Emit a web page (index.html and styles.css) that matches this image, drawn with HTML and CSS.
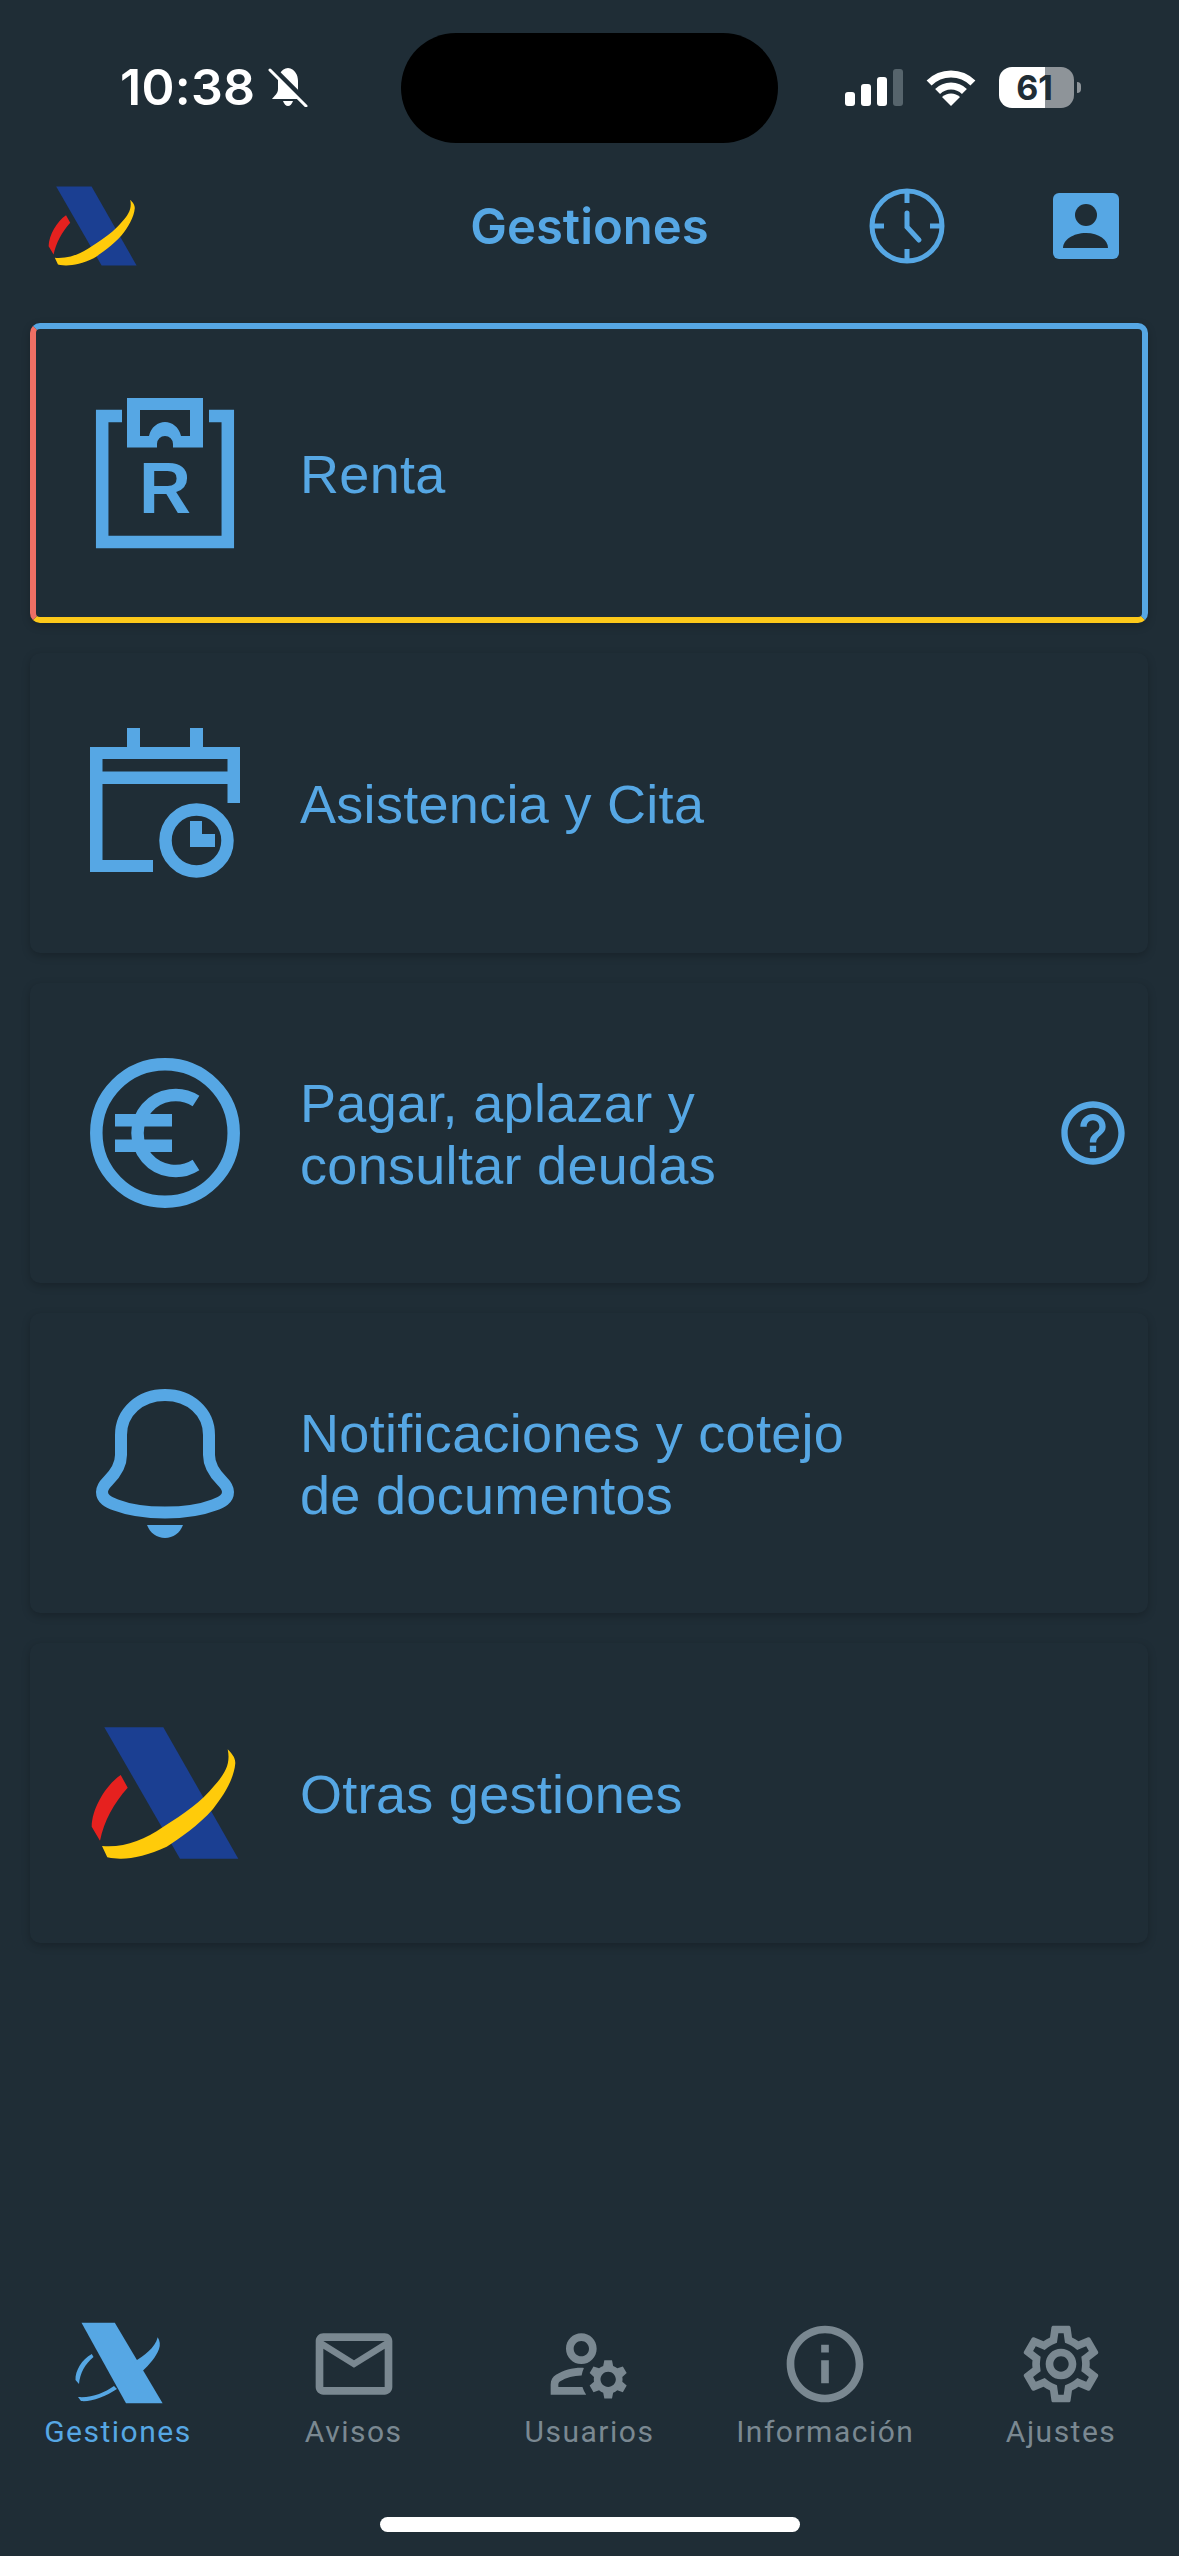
FILE: index.html
```html
<!DOCTYPE html>
<html lang="es">
<head>
    <meta charset="UTF-8">
    <meta name="viewport" content="width=device-width, initial-scale=1.0">
    <title>Gestiones</title>
    <link rel="stylesheet" href="styles.css">
</head>
<body>
    <svg class="defs" width="0" height="0">
        <symbol id="logo" viewBox="0 0 160 160">
            <path fill="#1b3f92" d="M20.3 14.3H79.3L154.3 145.7H96Z"/>
            <path fill="#e6211f" d="M36.7 62L43.7 74.7C30 90 20 108 16 127.7L7.7 113.7C8 95 22 72 36.7 62Z"/>
            <path fill="#ffcb0a" d="M143.7 36.3C147 40 151.5 44 151.3 50.3C150 66 140 82 129 96C115 112 95 126 82.7 133.7C65 142 48 146 36 145.7L27 145L23.3 144.3L18 133C40 135 60 127 79 114C100 101 118 88 130 73C140 62 147 52 143.7 36.3Z"/>
        </symbol>
    </svg>

    <div class="app">
        <div class="island"></div>

        <div class="status">
            <div class="status-left">
                <span class="time">10:38</span>
                <svg class="silent" width="40" height="40" viewBox="0 0 40 40">
                    <path fill="#fff" d="M20 1C13 2 10 8 10 14V22C10 27 6 29 4 32H36C34 29 30 27 30 22V14C30 8 27 2 20 1Z"/>
                    <path fill="#fff" d="M15 34H25C24 37 22 39 20 39C18 39 16 37 15 34Z"/>
                    <path stroke="#1f2d36" stroke-width="6" d="M4 1L39 36"/>
                    <path stroke="#fff" stroke-width="3" stroke-linecap="round" d="M2 3L38 39"/>
                </svg>
            </div>
            <div class="status-right">
                <svg width="58" height="37" viewBox="0 0 58 37">
                    <rect fill="#fff" x="0" y="23" width="10" height="14" rx="3"/>
                    <rect fill="#fff" x="16" y="15" width="10" height="22" rx="3"/>
                    <rect fill="#fff" x="32" y="8" width="10" height="29" rx="3"/>
                    <rect fill="#56646c" x="48" y="0" width="10" height="37" rx="3"/>
                </svg>
                <svg width="50" height="37" viewBox="0 0 50 37">
                    <path fill="none" stroke="#fff" stroke-width="7" d="M3.1 14.1A31 31 0 0 1 46.9 14.1"/>
                    <path fill="none" stroke="#fff" stroke-width="7" d="M11.6 22.6A19 19 0 0 1 38.4 22.6"/>
                    <path fill="#fff" d="M25 37L16 28A13 13 0 0 1 34 28Z"/>
                </svg>
                <div class="battery">
                    <div class="battery-body"><span>61</span></div>
                    <div class="battery-nub"></div>
                </div>
            </div>
        </div>

        <header class="topbar">
            <svg class="top-icon" width="96" height="96"><use href="#logo"/></svg>
            <h1 class="title">Gestiones</h1>
            <div class="top-actions">
                <svg class="top-icon blue-line" width="76" height="76" viewBox="0 0 76 76">
                    <circle cx="38" cy="38" r="35"/>
                    <path d="M38 3V15M38 61V73M3 38H15M61 38H73"/>
                    <path stroke-linecap="round" d="M38 25V39L50 52"/>
                </svg>
                <svg class="top-icon" width="66" height="66" viewBox="0 0 66 66">
                    <rect fill="#56a7e4" width="66" height="66" rx="6"/>
                    <circle fill="#1f2d36" cx="33" cy="22" r="11"/>
                    <path fill="#1f2d36" d="M10 55C10 47 20 40 33 40C46 40 55 47 55 55Z"/>
                </svg>
            </div>
        </header>

        <main class="list">
            <a class="card card-active">
                <svg class="card-icon" width="160" height="160" viewBox="0 0 160 160">
                    <path fill="none" stroke="#56a7e4" stroke-width="12.5" d="M38 23H18.2V149H143.8V23H125"/>
                    <path fill="#56a7e4" fill-rule="evenodd" d="M43 5H119V54.5H89V51A8 8 0 0 0 73 51V54.5H43ZM56 17V43H65C67 34 74 29 81 29C88 29 95 34 97 43H106V17Z"/>
                    <text class="icon-letter" x="81" y="120" text-anchor="middle">R</text>
                </svg>
                <span class="card-label">Renta</span>
            </a>
            <a class="card">
                <svg class="card-icon" width="160" height="160" viewBox="0 0 160 160">
                    <path fill="#56a7e4" fill-rule="evenodd" d="M43 5H56V24H106V5H119V24H156V80H143.5V61H18.5V137H69V149H6V24H43ZM18.5 36V48.600H143.5V36Z"/>
                    <circle fill="none" stroke="#56a7e4" stroke-width="12.5" cx="112.5" cy="117.5" r="31"/>
                    <path fill="#56a7e4" d="M106 98H118V111H131V124H106Z"/>
                </svg>
                <span class="card-label">Asistencia y Cita</span>
            </a>
            <a class="card">
                <svg class="card-icon" width="160" height="160" viewBox="0 0 160 160">
                    <circle fill="none" stroke="#56a7e4" stroke-width="12.5" cx="81" cy="80" r="68.7"/>
                    <path fill="none" stroke="#56a7e4" stroke-width="12.5" d="M112 48A38 38 0 1 0 112 112"/>
                    <path fill="#56a7e4" d="M31 61H88V73.5H31ZM31 86.5H88V99H31Z"/>
                </svg>
                <span class="card-label">Pagar, aplazar y<br>consultar deudas</span>
                <svg class="help" width="76" height="76" viewBox="0 0 24 24">
                    <path fill="#56a7e4" d="M11 18h2v-2h-2v2zm1-16C6.48 2 2 6.48 2 12s4.48 10 10 10 10-4.48 10-10S17.52 2 12 2zm0 18c-4.41 0-8-3.59-8-8s3.59-8 8-8 8 3.59 8 8-3.59 8-8 8zm0-14c-2.21 0-4 1.79-4 4h2c0-1.1.9-2 2-2s2 .9 2 2c0 2-3 1.75-3 5h2c0-2.25 3-2.5 3-5 0-2.21-1.79-4-4-4z"/>
                </svg>
            </a>
            <a class="card">
                <svg class="card-icon" width="160" height="160" viewBox="0 0 160 160">
                    <path fill="none" stroke="#56a7e4" stroke-width="12" d="M81 12C56 12 37 29 37 52V72C37 84 30 92 24 98C20 102 18 105 18 109C18 116 24 119 32 122C45 127 62 129.5 81 129.5C100 129.5 117 127 130 122C138 119 144 116 144 109C144 105 142 102 138 98C132 92 125 84 125 72V52C125 29 106 12 81 12Z"/>
                    <path fill="#56a7e4" d="M63 142H99C96 150 89 155 81 155C73 155 66 150 63 142Z"/>
                </svg>
                <span class="card-label">Notificaciones y cotejo<br>de documentos</span>
            </a>
            <a class="card">
                <svg class="card-icon" width="160" height="160"><use href="#logo"/></svg>
                <span class="card-label">Otras gestiones</span>
            </a>
        </main>

        <nav class="tabs">
            <div class="tab tab-on">
                <svg class="tab-icon" width="92" height="92" viewBox="0 0 92 92">
                    <path d="M9.5 4.7H42.8L90.6 85.3H54Z"/>
                    <path d="M85.700 19.3C88 23 88.5 27 87 31C84 39 78 46 69.6 54L62 44C72 38 83 30 85.7 19.3ZM45 71C33 79 19 84 9 83L6 79C20 80 32 75 42 68Z"/>
                    <path d="M19.8 36L21.5 39C13 46 8 55 7 66L3.5 62C3 53 10 41 19.8 36Z"/>
                </svg>
                <span class="tab-label">Gestiones</span>
            </div>
            <div class="tab">
                <svg class="tab-icon" width="92" height="92" viewBox="0 0 24 24">
                    <path d="M20 4H4c-1.1 0-1.99.9-1.99 2L2 18c0 1.1.9 2 2 2h16c1.1 0 2-.9 2-2V6c0-1.1-.9-2-2-2zm0 14H4V8l8 5 8-5v10zm-8-7L4 6h16l-8 5z"/>
                </svg>
                <span class="tab-label">Avisos</span>
            </div>
            <div class="tab">
                <svg class="tab-icon" width="92" height="92" viewBox="0 0 24 24">
                    <path d="M4 18v-.65c0-.34.16-.66.41-.81C6.1 15.53 8.03 15 10 15c.03 0 .05 0 .08.01.1-.7.3-1.37.59-1.98-.22-.02-.44-.03-.67-.03-2.42 0-4.68.67-6.61 1.82-.88.52-1.39 1.5-1.39 2.53V20h9.26c-.42-.6-.75-1.28-.97-2H4zM10 12c2.21 0 4-1.79 4-4s-1.79-4-4-4-4 1.79-4 4 1.79 4 4 4zm0-6c1.1 0 2 .9 2 2s-.9 2-2 2-2-.9-2-2 .9-2 2-2zM20.75 16c0-.22-.03-.42-.06-.63l1.14-1.01-1-1.73-1.45.49c-.32-.27-.68-.48-1.08-.63L18 11h-2l-.3 1.49c-.4.15-.76.36-1.08.63l-1.45-.49-1 1.73 1.14 1.01c-.03.21-.06.41-.06.63s.03.42.06.63l-1.14 1.01 1 1.73 1.45-.49c.32.27.68.48 1.08.63L16 21h2l.3-1.49c.4-.15.76-.36 1.08-.63l1.45.49 1-1.73-1.14-1.01c.03-.21.06-.41.06-.63zM17 18c-1.1 0-2-.9-2-2s.9-2 2-2 2 .9 2 2-.9 2-2 2z"/>
                </svg>
                <span class="tab-label">Usuarios</span>
            </div>
            <div class="tab">
                <svg class="tab-icon" width="92" height="92" viewBox="0 0 24 24">
                    <path d="M11 7h2v2h-2zm0 4h2v6h-2zm1-9C6.48 2 2 6.48 2 12s4.48 10 10 10 10-4.48 10-10S17.52 2 12 2zm0 18c-4.41 0-8-3.59-8-8s3.59-8 8-8 8 3.59 8 8-3.59 8-8 8z"/>
                </svg>
                <span class="tab-label">Información</span>
            </div>
            <div class="tab">
                <svg class="tab-icon" width="92" height="92" viewBox="0 0 24 24">
                    <path d="M19.43 12.98c.04-.32.07-.64.07-.98 0-.34-.03-.66-.07-.98l2.11-1.65c.19-.15.24-.42.12-.64l-2-3.46c-.09-.16-.26-.25-.44-.25-.06 0-.12.01-.17.03l-2.49 1c-.52-.4-1.08-.73-1.69-.98l-.38-2.65C14.46 2.18 14.25 2 14 2h-4c-.25 0-.46.18-.49.42l-.38 2.65c-.61.25-1.17.59-1.69.98l-2.49-1c-.06-.02-.12-.03-.18-.03-.17 0-.34.09-.43.25l-2 3.46c-.13.22-.07.49.12.64l2.11 1.65c-.04.32-.07.65-.07.98 0 .33.03.66.07.98l-2.11 1.65c-.19.15-.24.42-.12.64l2 3.46c.09.16.26.25.44.25.06 0 .12-.01.17-.03l2.49-1c.52.4 1.08.73 1.69.98l.38 2.65c.03.24.24.42.49.42h4c.25 0 .46-.18.49-.42l.38-2.65c.61-.25 1.17-.59 1.69-.98l2.49 1c.06.02.12.03.18.03.17 0 .34-.09.43-.25l2-3.46c.12-.22.07-.49-.12-.64l-2.11-1.65zm-1.98-1.71c.04.31.05.52.05.73 0 .21-.02.43-.05.73l-.14 1.13.89.7 1.08.84-.7 1.21-1.27-.51-1.04-.42-.9.68c-.43.32-.84.56-1.25.73l-1.06.43-.16 1.13-.2 1.35h-1.4l-.19-1.35-.16-1.13-1.06-.43c-.43-.18-.83-.41-1.23-.71l-.91-.7-1.06.43-1.27.51-.7-1.21 1.08-.84.89-.7-.14-1.13c-.03-.31-.05-.54-.05-.74s.02-.43.05-.73l.14-1.13-.89-.7-1.08-.84.7-1.21 1.27.51 1.04.42.9-.68c.43-.32.84-.56 1.25-.73l1.06-.43.16-1.13.2-1.35h1.39l.19 1.35.16 1.13 1.06.43c.43.18.83.41 1.23.71l.91.7 1.06-.43 1.27-.51.7 1.21-1.07.85-.89.7.14 1.13zM12 8c-2.21 0-4 1.79-4 4s1.79 4 4 4 4-1.79 4-4-1.79-4-4-4zm0 6c-1.1 0-2-.9-2-2s.9-2 2-2 2 .9 2 2-.9 2-2 2z"/>
                </svg>
                <span class="tab-label">Ajustes</span>
            </div>
        </nav>

        <div class="home-bar"></div>
    </div>
</body>
</html>
```

FILE: styles.css
```css
* {
    margin: 0;
    padding: 0;
    box-sizing: border-box;
}
html, body {
    background-color: #1f2d36;
}
.defs {
    position: absolute;
}
.app {
    position: relative;
    width: 1179px;
    height: 2556px;
    display: flex;
    flex-direction: column;
    font-family: "Liberation Sans", sans-serif;
    overflow: hidden;
}
.island {
    position: absolute;
    top: 33px;
    left: 401px;
    width: 377px;
    height: 110px;
    border-radius: 55px;
    background-color: #000;
}

/* status bar */
.status {
    height: 174px;
    padding: 0 98px 0 120px;
    display: flex;
    align-items: center;
    justify-content: space-between;
}
.status-left {
    display: flex;
    align-items: center;
    gap: 13px;
}
.time {
    font: 600 50px Inter, sans-serif;
    color: #fff;
    letter-spacing: 0.3px;
}
.status-right {
    display: flex;
    align-items: center;
    gap: 23px;
}
.battery {
    display: flex;
    align-items: center;
    gap: 3px;
}
.battery-body {
    width: 75px;
    height: 41px;
    border-radius: 13px;
    background: linear-gradient(90deg, #fff 61%, #8e9499 61%);
    display: flex;
    align-items: center;
    justify-content: center;
}
.battery-body span {
    padding-right: 4px;
    font: 700 34px Inter, sans-serif;
    color: #1f2d36;
}
.battery-nub {
    width: 4px;
    height: 11px;
    border-radius: 0 4px 4px 0;
    background-color: #8e9499;
}

/* top bar */
.topbar {
    height: 104px;
    padding: 0 44px;
    display: grid;
    grid-template-columns: 1fr auto 1fr;
    align-items: center;
}
.title {
    font: 600 49px Inter, sans-serif;
    color: #56a7e4;
}
.top-actions {
    padding-right: 16px;
    display: flex;
    align-items: center;
    justify-content: flex-end;
    gap: 108px;
}
.top-icon {
    filter: blur(0.6px);
}
.blue-line {
    fill: none;
    stroke: #56a7e4;
    stroke-width: 5;
}

/* cards */
.list {
    padding: 45px 31px 0 30px;
    display: flex;
    flex-direction: column;
    gap: 30px;
}
.card {
    height: 300px;
    padding: 0 17px 0 54px;
    display: flex;
    align-items: center;
    gap: 56px;
    border-radius: 10px;
    background-color: #1f2d36;
    box-shadow: 0 3px 8px rgba(0, 0, 0, 0.22);
}
.card-active {
    padding-left: 48px;
    border-style: solid;
    border-width: 6px;
    border-color: #56a7e4 #56a7e4 #fdc91a #ef6f64;
}
.card-label {
    flex: 1;
    padding-top: 2px;
    font-size: 54px;
    line-height: 62px;
    letter-spacing: 0.3px;
    color: #56a7e4;
}
.icon-letter {
    font: 700 72px "Liberation Sans", sans-serif;
    fill: #56a7e4;
}

/* bottom tabs */
.tabs {
    margin-top: auto;
    display: grid;
    grid-template-columns: repeat(5, 1fr);
}
.tab {
    display: flex;
    flex-direction: column;
    align-items: center;
    gap: 4px;
    fill: #7a8891;
    color: #7a8891;
}
.tab-on {
    fill: #56a7e4;
    color: #56a7e4;
}
.tab-icon {
    filter: blur(0.7px);
}
.tab-label {
    font: 400 30px/36px Roboto, sans-serif;
    letter-spacing: 1.5px;
}
.home-bar {
    width: 420px;
    height: 15px;
    margin: 67px auto 24px;
    border-radius: 8px;
    background-color: #fff;
}
```
